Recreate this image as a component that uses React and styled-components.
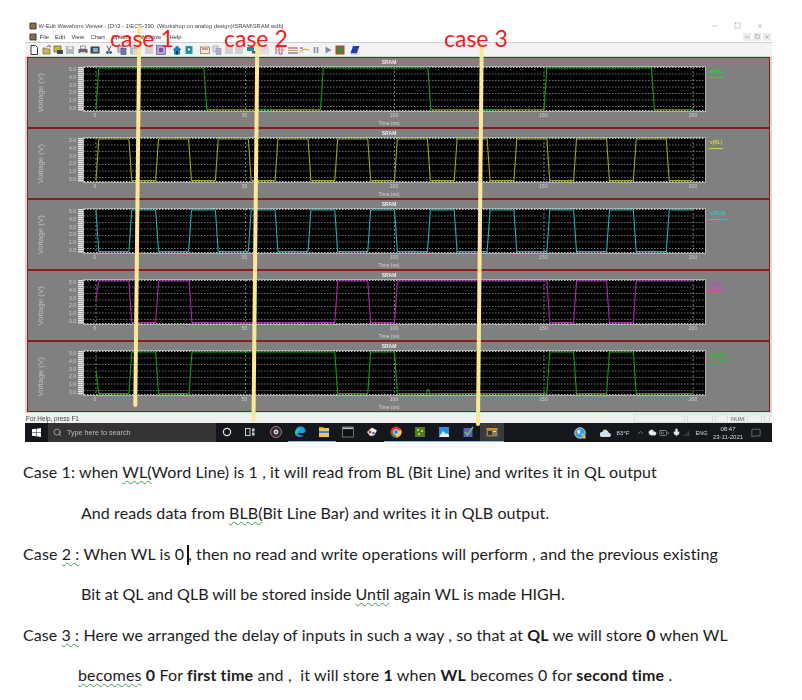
import React from 'react';
import styled, { createGlobalStyle } from 'styled-components';
import { Search, ChevronUp, Mic, Cloud, BatteryMedium, SignalHigh, MessageSquare, Minus, Square, X } from 'lucide-react';

const GlobalStyle = createGlobalStyle`
  html, body { margin: 0; padding: 0; background: #fff; }
  body { font-family: "Liberation Sans", Arial, sans-serif; }
`;

const Page = styled.div`
  position: relative;
  width: 802px;
  height: 700px;
  padding-top: 20px;
  box-sizing: border-box;
  overflow: hidden;
`;

const Shot = styled.div`
  width: 747px;
  margin-left: 25px;
  filter: blur(0.35px);
`;

const TitleBar = styled.div`
  display: flex;
  align-items: center;
  height: 11px;
  padding-left: 4px;
  color: #444;
  font-size: 5.8px;
  white-space: pre;
`;

const BadgeSvg = styled.svg`
  flex: none;
  width: 8px;
  height: 8px;
`;

const WinButtons = styled.div`
  display: flex;
  align-items: center;
  margin-left: auto;
  margin-right: 8px;
  gap: 15px;
  color: #555;
`;

const MenuBar = styled.div`
  display: flex;
  align-items: center;
  height: 11px;
  padding-left: 4px;
  color: #333;
  font-size: 5.8px;
`;

const MenuItem = styled.span`
  margin-left: ${p => p.$gap}px;
`;

const InnerButtons = styled.div`
  display: flex;
  margin-left: auto;
  margin-right: 1px;
  gap: 2px;
`;

const InnerButton = styled.span`
  display: flex;
  align-items: center;
  justify-content: center;
  width: 8px;
  height: 8px;
  background: #ececec;
  color: #666;
`;

const ToolBar = styled.div`
  display: flex;
  align-items: center;
  height: 14px;
  box-sizing: border-box;
  background: #f3f3f3;
  border-top: 1px solid #cfcfcf;
  padding-top: 1px;
`;

const ToolSlot = styled.span`
  display: flex;
  width: 10px;
  height: 10px;
  margin-left: ${p => p.$gap}px;
  opacity: ${p => (p.$dim ? 0.55 : 1)};
`;

const ChartArea = styled.div`
  background: #d6d6d6;
  padding: 1px 2px 1px 2px;
`;

const Panel = styled.div`
  height: 71px;
  box-sizing: border-box;
  background: #808080;
  border: 1px solid #8a1c1c;
  color: #d4d4d4;
  overflow: hidden;
`;

const CenterLabel = styled.div`
  width: 722px;
  height: ${p => p.$h}px;
  line-height: ${p => p.$h}px;
  text-align: center;
  font-size: 5px;
  font-weight: ${p => (p.$bold ? 700 : 400)};
  color: ${p => (p.$bold ? '#eee' : '#d4d4d4')};
`;

const PlotRow = styled.div`
  display: flex;
  height: 44px;
`;

const VoltLabel = styled.div`
  display: flex;
  align-items: center;
  justify-content: center;
  width: 24px;
  padding-top: 7px;
  box-sizing: border-box;
  font-size: 8px;
  color: #c0c0c0;
  span {
    writing-mode: vertical-rl;
    transform: rotate(180deg);
    white-space: nowrap;
  }
`;

const ScaleLabels = styled.div`
  display: flex;
  flex-direction: column;
  justify-content: space-between;
  align-items: flex-end;
  width: 24px;
  font-size: 5px;
  line-height: 5px;
  color: #d0d0d0;
`;

const Ticks = styled.div`
  width: 6px;
  margin-left: 2px;
  background: repeating-linear-gradient(to bottom, #e4e4e4 0 1px, #a4a4a4 1px 2px);
`;

const PlotSvg = styled.svg`
  display: block;
  width: 621px;
  height: 44px;
  background: #000;
  box-shadow: 0 0 0 1px #b0b0b0;
`;

const Legend = styled.div`
  height: 8px;
  margin: 2px 0 0 4px;
  padding: 0 1px;
  font-size: 4.8px;
  font-weight: 700;
  line-height: 6px;
  color: ${p => p.$color};
  border-bottom: 1px solid ${p => p.$color};
`;

const AxisRow = styled.div`
  display: flex;
  justify-content: space-between;
  width: 598px;
  height: 8px;
  margin-left: 67px;
  font-size: 5px;
  line-height: 9px;
  color: #d0d0d0;
`;

const AxisTick = styled.span`
  display: flex;
  justify-content: center;
  width: 0;
`;

const StatusBar = styled.div`
  display: flex;
  align-items: center;
  height: 10px;
  background: #f0f0f0;
  padding-left: 1px;
  color: #444;
  font-size: 6.4px;
`;

const StatusFields = styled.div`
  display: flex;
  margin-left: auto;
  height: 9px;
`;

const StatusField = styled.div`
  width: ${p => p.$w}px;
  margin-right: 2px;
  border: 1px solid #dcdcdc;
  box-sizing: border-box;
  font-size: 5.6px;
  line-height: 8px;
  text-align: center;
  color: #555;
`;

const TaskBar = styled.div`
  display: flex;
  align-items: center;
  height: 19px;
  background: #14181d;
  color: #e8e8e8;
`;

const StartButton = styled.div`
  display: flex;
  align-items: center;
  justify-content: center;
  width: 23px;
`;

const SearchBox = styled.div`
  display: flex;
  align-items: center;
  width: 168px;
  height: 19px;
  background: #343434;
  padding-left: 5px;
  box-sizing: border-box;
  gap: 5px;
  font-size: 7.2px;
  color: #bdbdbd;
`;

const TaskSlots = styled.div`
  display: flex;
`;

const TaskSlot = styled.div`
  display: flex;
  align-items: center;
  justify-content: center;
  width: ${p => p.$w || 24}px;
  height: 19px;
  box-sizing: border-box;
  background: ${p => (p.$active ? '#3b3b3b' : 'transparent')};
  border-bottom: 1px solid ${p => (p.$open ? '#76b9ed' : 'transparent')};
  margin-left: ${p => p.$gap || 0}px;
`;

const Tray = styled.div`
  display: flex;
  align-items: center;
  margin-left: 69px;
  font-size: 6.2px;
  color: #d8d8d8;
`;

const TraySlot = styled.span`
  display: flex;
  align-items: center;
  justify-content: center;
  width: ${p => p.$w}px;
  margin-left: ${p => p.$gap || 0}px;
  font-size: ${p => p.$small ? '5.5px' : 'inherit'};
`;

const Clock = styled.div`
  width: 32px;
  text-align: center;
  font-size: 6px;
  line-height: 8px;
`;

const Notes = styled.div`
  padding-top: 10.4px;
  font-family: Lato, "Liberation Sans", sans-serif;
  font-size: 16px;
  color: #1c1c1c;
`;

const NoteLine = styled.div`
  height: 40.6px;
  line-height: 40.6px;
  padding-left: ${p => p.$indent}px;
  letter-spacing: ${p => p.$track || 0}px;
  white-space: pre;
`;

const Squiggle = styled.span`
  text-decoration: underline wavy #3f9a4a 1px;
  text-underline-offset: 2px;
`;

const Caret = styled.span`
  display: inline-block;
  width: 2px;
  height: 20px;
  margin: 0 -1px 0 3px;
  vertical-align: -5px;
  background: #111;
`;

const CaseLabel = styled.div`
  position: absolute;
  left: ${p => p.$left}px;
  top: 24px;
  font-family: Lato, "Liberation Sans", sans-serif;
  font-size: 23px;
  line-height: 28px;
  color: #ee1c25;
  white-space: nowrap;
`;

const MarkerOverlay = styled.svg`
  position: absolute;
  left: 0;
  top: 0;
  width: 802px;
  height: 450px;
`;

const tools = [
  { x: 34, k: 'doc' }, { x: 46.7, k: 'open' }, { x: 58, k: 'db' }, { x: 70.3, k: 'save', dim: true },
  { x: 82.7, k: 'print' }, { x: 95, k: 'cam' }, { x: 109, k: 'cut' }, { x: 122.3, k: 'copy' },
  { x: 134.3, k: 'paste', dim: true }, { x: 149.3, k: 'lines', dim: true }, { x: 161.3, k: 'purple' },
  { x: 176.7, k: 'home' }, { x: 189.3, k: 'find' }, { x: 204.7, k: 'folder' }, { x: 216.7, k: 'copy', dim: true },
  { x: 228.7, k: 'lines', dim: true }, { x: 239.3, k: 'lines', dim: true }, { x: 251.7, k: 'teal' }, { x: 264, k: 'abc', dim: true },
  { x: 280, k: 'wave' }, { x: 292.7, k: 'wave2' }, { x: 304, k: 'wave3' }, { x: 316, k: 'pause' },
  { x: 327.7, k: 'play' }, { x: 340.3, k: 'chip' }, { x: 355, k: 'book' },
];

const ToolIcon = ({ k }) => {
  const art = {
    doc: <path d="M2 .5h4.5L8.5 2.5v7h-6.500z" fill="#fff" stroke="#222" strokeWidth=".9" />,
    open: <><path d="M1 3h3l1 1h3v5H1z" fill="#d6b24a" stroke="#555" strokeWidth=".6" /><path d="M5 2 7 .5 9 2" fill="none" stroke="#333" strokeWidth=".8" /></>,
    db: <><rect x="1" y="1" width="7" height="6" fill="#c9b93a" stroke="#444" strokeWidth=".6" /><rect x="4" y="5" width="6" height="4" fill="#3d4a55" /></>,
    save: <><rect x="1" y="1" width="8" height="8" fill="#7d8a95" /><rect x="3" y="1.500" width="4" height="2.500" fill="#dfe3e6" /></>,
    print: <><rect x="2.500" y="1" width="5" height="3" fill="#eee" stroke="#555" strokeWidth=".5" /><rect x=".5" y="4" width="9" height="4" fill="#666" /><rect x="2.500" y="7" width="5" height="2" fill="#ddd" /></>,
    cam: <><rect x=".5" y="1.500" width="9" height="7" fill="#444" /><rect x="3" y="3" width="5" height="4" fill="#7bb0c9" /></>,
    cut: <><path d="M3 .5 5.500 6M7 .5 4.500 6" stroke="#555" strokeWidth=".9" /><circle cx="3.500" cy="7.500" r="1.400" fill="#2f5d8a" /><circle cx="6.500" cy="7.500" r="1.400" fill="#2f5d8a" /></>,
    copy: <><rect x="1" y="1" width="5" height="6" fill="#c7c9e8" stroke="#556" strokeWidth=".6" /><rect x="4" y="3.500" width="5" height="6" fill="#6d78c0" stroke="#445" strokeWidth=".6" /></>,
    paste: <><rect x="1" y="1.500" width="7" height="8" fill="#8f8f8f" /><rect x="4" y="4" width="5" height="5.500" fill="#c4c4c4" /></>,
    lines: <path d="M1 2h8M1 4h8M1 6h8M1 8h8" stroke="#777" strokeWidth="1" />,
    purple: <><rect x=".5" y=".5" width="9" height="9" fill="#b9a6d8" stroke="#6a4a9a" strokeWidth=".7" /><rect x="3" y="3" width="4" height="4" fill="#7d4fb0" /></>,
    home: <><path d="M5 .5 9.500 5H8v4.500H2V5H.5z" fill="#1d7fb5" /><rect x="4" y="6" width="2" height="3.500" fill="#0a3d5c" /></>,
    find: <><rect x="1.500" y="1" width="7" height="8" fill="#17a0a8" /><circle cx="5" cy="4.500" r="2" fill="#a8e6f0" stroke="#124" strokeWidth=".6" /></>,
    folder: <><rect x=".5" y="2" width="9" height="6.500" fill="#f2e7c8" stroke="#6b5a3a" strokeWidth=".6" /><path d="M2 4h6" stroke="#b5436b" strokeWidth="1" /></>,
    teal: <><rect x="0" y="2" width="7" height="4" fill="#138f9c" /><rect x="5" y="6" width="5" height="2.500" fill="#555" /></>,
    abc: <><rect x=".5" y="1.500" width="9" height="7" fill="#e0e0e0" stroke="#999" strokeWidth=".6" /><path d="M2 4h6M2 6h4" stroke="#999" strokeWidth=".8" /></>,
    wave: <><path d="M1 9V2h3v7h3V1" fill="none" stroke="#a33ba3" strokeWidth=".9" /><path d="M0 5h10" stroke="#d6b13a" strokeWidth=".9" /></>,
    wave2: <><path d="M0 3h10" stroke="#c33" strokeWidth="1" /><path d="M0 5.500h10" stroke="#d0a93a" strokeWidth="1" /><path d="M0 8h10" stroke="#6a3ba3" strokeWidth="1" /></>,
    wave3: <><path d="M0 8 5 4l5 1" fill="none" stroke="#d0a020" strokeWidth="1" /><path d="M1 3h3" stroke="#a33ba3" strokeWidth="1" /></>,
    pause: <path d="M3.500 2v6M6.500 2v6" stroke="#8a8f96" strokeWidth="1.600" />,
    play: <path d="M2.500 1.500 8.500 5l-6 3.500z" fill="#8a8f96" />,
    chip: <><rect x=".5" y=".5" width="9" height="9" fill="#b5482f" /><rect x="2" y="2" width="6" height="6" fill="#3f8a3a" /></>,
    book: <><path d="M3 1h6.500L7 8H.5z" fill="#1f3fae" /><path d="M.5 8H7l.5 1.500H1z" fill="#9fb4ea" /></>,
  };
  return <svg viewBox="0 0 10 10" width="10" height="10">{art[k]}</svg>;
};

const AppBadge = () => (
  <BadgeSvg viewBox="0 0 10 10">
    <rect x=".5" y=".5" width="9" height="9" rx="1.500" fill="#5a5148" />
    <circle cx="5" cy="5" r="2.600" fill="#c07a2a" />
    <circle cx="5" cy="5" r="1.100" fill="#2c6fa0" />
  </BadgeSvg>
);

const WinLogo = ({ size = 9, color = '#fff' }) => (
  <svg viewBox="0 0 10 10" width={size} height={size} fill={color}>
    <path d="M0 1.400 4.400.8v3.900H0zM5 .7 10 0v4.700H5zM0 5.300h4.400v3.900L0 8.600zM5 5.300h5V10l-5-.7z" />
  </svg>
);

const AppIcon = ({ k }) => {
  const art = {
    ring: <><circle cx="6" cy="6" r="3.600" fill="none" stroke="#e8e8e8" strokeWidth="1.200" /></>,
    view: <><rect x="1.500" y="2.500" width="4.500" height="7" fill="none" stroke="#ccc" strokeWidth="1" /><path d="M8 2.500h2.500v3H8zM8 6.500h2.500v3H8z" fill="#ccc" /></>,
    disc: <><circle cx="6" cy="6" r="5.500" fill="#2a2a30" stroke="#b56a8a" strokeWidth="1" /><circle cx="6" cy="6" r="2.400" fill="#e0dcd0" /><circle cx="6" cy="6" r=".9" fill="#333" /></>,
    edge: <><path d="M1 7C1 3 3.500.5 6.500.5c3 0 5 2.200 5 4.500 0 1.500-1.500 2-3 2H4c.3 2 3 3.500 6 2-1.300 1.500-3 2.200-4.500 2C2.500 10.800 1 9 1 7z" fill="#1b9de2" /><path d="M1.500 5C3 2.500 6 2 8 3.500 6 3 4.500 4 4 6 3 7.500 2 8 1.200 8z" fill="#37c48f" /></>,
    files: <><rect x="1" y="2" width="10" height="9" fill="#f3c54a" /><rect x="1" y="5" width="10" height="2" fill="#2f8fd6" /><rect x="1" y="1" width="4.500" height="1.500" fill="#d9a22e" /></>,
    term: <><rect x=".5" y="1" width="11" height="10" fill="#111" stroke="#999" strokeWidth=".7" /><rect x="1" y="1.500" width="10" height="1.600" fill="#bbb" /></>,
    paint: <><path d="M1 6 6 1.500l5 3-3 5-4 .5z" fill="#eee" /><circle cx="4" cy="6" r="1.500" fill="#d33" /><circle cx="7.500" cy="7" r="1.300" fill="#37b" /></>,
    chrome: <><circle cx="6" cy="6" r="5.500" fill="#d93a2c" /><path d="M6 6 1.200 8.800A5.500 5.500 0 0 0 6 11.500z" fill="#2e9e4a" /><path d="M6 6v5.500A5.500 5.500 0 0 0 11 3.500z" fill="#f6c533" /><circle cx="6" cy="6" r="2.500" fill="#3b7fe0" stroke="#fff" strokeWidth=".8" /></>,
    green: <><rect x="1" y="1" width="10" height="10" fill="#4f7a26" /><path d="M3 3h2v2H3zM7 4h2v2H7zM4 7h2v2H4z" fill="#b7d04d" /></>,
    photo: <><rect x="1" y="1" width="10" height="10" fill="#2a8fdc" /><path d="M1 11 5 5l3 3 1-1 2 2v2z" fill="#dff1ff" /></>,
    check: <><rect x="1.500" y="2" width="9" height="9" fill="#6557c4" /><path d="M3 6 5.500 9 11 1" fill="none" stroke="#5fd35a" strokeWidth="1.500" /></>,
    wedit: <><rect x=".5" y="2" width="11" height="8.500" fill="#8f7a5a" /><rect x="0.500" y="2" width="11" height="1.800" fill="#e08a2c" /><rect x="2" y="5" width="4" height="4" fill="#2f3a40" /><rect x="7" y="5" width="3" height="1" fill="#ddd" /></>,
    globe: <><circle cx="6" cy="6" r="5.300" fill="#3f9bd8" stroke="#e6f2fb" strokeWidth=".7" /><path d="M3 3.500 6 3l.5 3-2.500 1zM7.500 7l2-.5-.5 2.500z" fill="#e6f2fb" /><circle cx="10" cy="10" r="1.800" fill="#f1b52c" /></>,
    sun: <><circle cx="5" cy="5" r="2.500" fill="#f1c94c" /><path d="M2 10a2.500 2.500 0 0 1 .5-5 3.500 3.500 0 0 1 6.500 1 2 2 0 0 1 0 4z" fill="#cfe0ee" /></>,
  };
  return <svg viewBox="0 0 12 12" width="12" height="12">{art[k]}</svg>;
};

// turn a start level and a list of edge positions into a polyline, level flips on each edge
const level = v => 42.6 - v * 41.6;
const makeWave = (start, edges, first = null) => {
  let cur = start;
  const pts = [[147, level(first === null ? start : first)]];
  edges.forEach((e, i) => {
    if (!(i === 0 && first !== null)) pts.push([e, level(cur)]);
    cur = cur ? 0 : 1;
    pts.push([e + 6, level(cur)]);
  });
  pts.push([1397, level(cur)]);
  return pts.map(p => p.join(',')).join(' ');
};

const tenPeriods = Array.from({ length: 20 }, (_, i) => 147 + 125 * Math.floor(i / 2) + (i % 2 ? 69 : 0));
const storedEdges = [147, 216, 272, 342, 647, 716, 772, 1091, 1147, 1216, 1272];

const panels = [
  { name: 'v(WL)', line: '#12a014', legend: '#35d035', points: makeWave(0, [147, 373, 617, 842, 1085, 1310]) },
  { name: 'v(BL)', line: '#a3a318', legend: '#d0d040', points: makeWave(0, tenPeriods) },
  { name: 'v(BLB)', line: '#1fb0b0', legend: '#35c8c8', points: makeWave(1, tenPeriods) },
  { name: 'v(QL)', line: '#b523b5', legend: '#d838d8', points: makeWave(0, storedEdges, 0.55) },
  { name: 'v(QLB)', line: '#10a010', legend: '#25c825', points: makeWave(1, storedEdges, 0.55), blip: true },
];

const volts = ['5.0', '4.0', '3.0', '2.0', '1.0', '0.0'];
const times = ['0', '50', '100', '150', '200'];

const gridRows = [7, 13.5, 20, 26.5, 33, 39.5];
const gridCols = [147, 460, 772, 1085, 1397];

const Plot = ({ panel }) => (
  <PlotSvg viewBox="122 0 1300 44" preserveAspectRatio="none">
    {gridRows.map(y => (
      <line key={y} x1="122" x2="1422" y1={y} y2={y} stroke="#6e6e6e" strokeWidth="1" strokeDasharray="1.500 1.500" vectorEffect="non-scaling-stroke" />
    ))}
    <line x1="122" x2="1422" y1="0.5" y2="0.5" stroke="#bdbdbd" strokeDasharray="1.500 1.500" vectorEffect="non-scaling-stroke" />
    <line x1="122" x2="1422" y1="43.5" y2="43.5" stroke="#bdbdbd" strokeDasharray="1.500 1.500" vectorEffect="non-scaling-stroke" />
    {gridCols.map(x => (
      <line key={x} x1={x} x2={x} y1="0" y2="44" stroke="#7a7a7a" strokeWidth="1" strokeDasharray="2 2" vectorEffect="non-scaling-stroke" />
    ))}
    <polyline points={panel.points} fill="none" stroke={panel.line} strokeWidth="1.100" vectorEffect="non-scaling-stroke" />
    {panel.blip && <polyline points="838,42.600 842,38 846,42.600" fill="none" stroke={panel.line} vectorEffect="non-scaling-stroke" />}
  </PlotSvg>
);

const WavePanel = ({ panel }) => (
  <Panel>
    <CenterLabel $h={9} $bold>SRAM</CenterLabel>
    <PlotRow>
      <VoltLabel><span>Voltage (V)</span></VoltLabel>
      <ScaleLabels>{volts.map(v => <span key={v}>{v}</span>)}</ScaleLabels>
      <Ticks />
      <Plot panel={panel} />
      <Legend $color={panel.legend}>{panel.name}</Legend>
    </PlotRow>
    <AxisRow>{times.map(t => <AxisTick key={t}>{t}</AxisTick>)}</AxisRow>
    <CenterLabel $h={8}>Time (ns)</CenterLabel>
  </Panel>
);

const taskApps = [
  { k: 'disc', gap: 2 }, { k: 'edge', open: true }, { k: 'files', open: true }, { k: 'term' }, { k: 'paint' },
  { k: 'chrome', open: true }, { k: 'green', open: true }, { k: 'photo', open: true }, { k: 'check', open: true },
  { k: 'wedit', open: true, active: true },
];

export default function App() {
  return (
    <Page>
      <GlobalStyle />
      <Shot>
        <TitleBar>
          <AppBadge />
          {' W-Edit Waveform Viewer - [D:\\3 - 1\\ECE-390  (Workshop on analog design)\\SRAM\\SRAM.wdb]'}
          <WinButtons>
            <Minus size={8} strokeWidth={1} />
            <Square size={7} strokeWidth={1} />
            <X size={8} strokeWidth={1} />
          </WinButtons>
        </TitleBar>
        <MenuBar>
          <AppBadge />
          <MenuItem $gap={2.7}>File</MenuItem>
          <MenuItem $gap={6}>Edit</MenuItem>
          <MenuItem $gap={6.4}>View</MenuItem>
          <MenuItem $gap={6.7}>Chart</MenuItem>
          <MenuItem $gap={6.8}>Options</MenuItem>
          <MenuItem $gap={9}>Window</MenuItem>
          <MenuItem $gap={8.4}>Help</MenuItem>
          <InnerButtons>
            <InnerButton><Minus size={6} strokeWidth={1.5} /></InnerButton>
            <InnerButton><Square size={5} strokeWidth={1.5} /></InnerButton>
            <InnerButton><X size={6} strokeWidth={1.5} /></InnerButton>
          </InnerButtons>
        </MenuBar>
        <ToolBar>
          {tools.map((t, i) => (
            <ToolSlot key={i} $dim={t.dim} $gap={i === 0 ? t.x - 30 : t.x - tools[i - 1].x - 10}>
              <ToolIcon k={t.k} />
            </ToolSlot>
          ))}
        </ToolBar>
        <ChartArea>
          {panels.map(p => <WavePanel key={p.name} panel={p} />)}
        </ChartArea>
        <StatusBar>
          For Help, press F1
          <StatusFields>
            <StatusField $w={51} />
            <StatusField $w={26} />
            <StatusField $w={13} />
            <StatusField $w={15}>NUM</StatusField>
            <StatusField $w={15} />
            <StatusField $w={6} />
          </StatusFields>
        </StatusBar>
        <TaskBar>
          <StartButton><WinLogo /></StartButton>
          <SearchBox>
            <Search size={9} strokeWidth={1.6} color="#ddd" />
            Type here to search
          </SearchBox>
          <TaskSlots>
            <TaskSlot $w={22}><AppIcon k="ring" /></TaskSlot>
            <TaskSlot $w={24}><AppIcon k="view" /></TaskSlot>
            {taskApps.map(a => (
              <TaskSlot key={a.k} $gap={a.gap} $open={a.open} $active={a.active}><AppIcon k={a.k} /></TaskSlot>
            ))}
          </TaskSlots>
          <Tray>
            <TraySlot $w={14}><AppIcon k="globe" /></TraySlot>
            <TraySlot $w={12} $gap={13}><AppIcon k="sun" /></TraySlot>
            <TraySlot $w={22}>83°F</TraySlot>
            <TraySlot $w={12}><ChevronUp size={9} strokeWidth={1.3} /></TraySlot>
            <TraySlot $w={12}><Cloud size={9} fill="#e8e8e8" strokeWidth={1} /></TraySlot>
            <TraySlot $w={12}><BatteryMedium size={10} strokeWidth={1.2} /></TraySlot>
            <TraySlot $w={13}><Mic size={9} fill="#e8e8e8" strokeWidth={1} /></TraySlot>
            <TraySlot $w={8}><SignalHigh size={8} strokeWidth={1.2} color="#999" /></TraySlot>
            <TraySlot $w={21} $small>ENG</TraySlot>
            <Clock>08:47<br />23-11-2021</Clock>
            <TraySlot $w={24}><MessageSquare size={10} strokeWidth={1} /></TraySlot>
          </Tray>
        </TaskBar>
      </Shot>

      <Notes>
        <NoteLine $indent={23} $track={0.1}>Case 1: when <Squiggle>WL(</Squiggle>Word Line) is 1 , it will read from BL (Bit Line) and writes it in QL output</NoteLine>
        <NoteLine $indent={81} $track={0.07}>And reads data from <Squiggle>BLB(</Squiggle>Bit Line Bar) and writes it in QLB output.</NoteLine>
        <NoteLine $indent={23} $track={0.12}>Case <Squiggle>2 :</Squiggle> When WL is 0<Caret />, then no read and write operations will perform , and the previous existing</NoteLine>
        <NoteLine $indent={81}>Bit at QL and QLB will be stored inside <Squiggle>Until</Squiggle> again WL is made HIGH.</NoteLine>
        <NoteLine $indent={23} $track={0.09}>Case <Squiggle>3 :</Squiggle> Here we arranged the delay of inputs in such a way , so that at <b>QL</b> we will store <b>0</b> when WL</NoteLine>
        <NoteLine $indent={78} $track={0.15}><Squiggle>becomes</Squiggle> <b>0</b> For <b>first time</b> and ,  it will store <b>1</b> when <b>WL</b> becomes 0 for <b>second time</b> .</NoteLine>
      </Notes>

      <MarkerOverlay viewBox="0 0 802 450">
        <line x1="139.300" y1="28" x2="135.300" y2="405" stroke="#ffe699" strokeWidth="4" strokeLinecap="round" />
        <line x1="257.300" y1="45" x2="253.500" y2="420" stroke="#ffe699" strokeWidth="4" strokeLinecap="round" />
        <line x1="481.700" y1="46" x2="478" y2="424" stroke="#ffe699" strokeWidth="4" strokeLinecap="round" />
      </MarkerOverlay>
      <CaseLabel $left={110}>case 1</CaseLabel>
      <CaseLabel $left={224}>case 2</CaseLabel>
      <CaseLabel $left={444}>case 3</CaseLabel>
    </Page>
  );
}
